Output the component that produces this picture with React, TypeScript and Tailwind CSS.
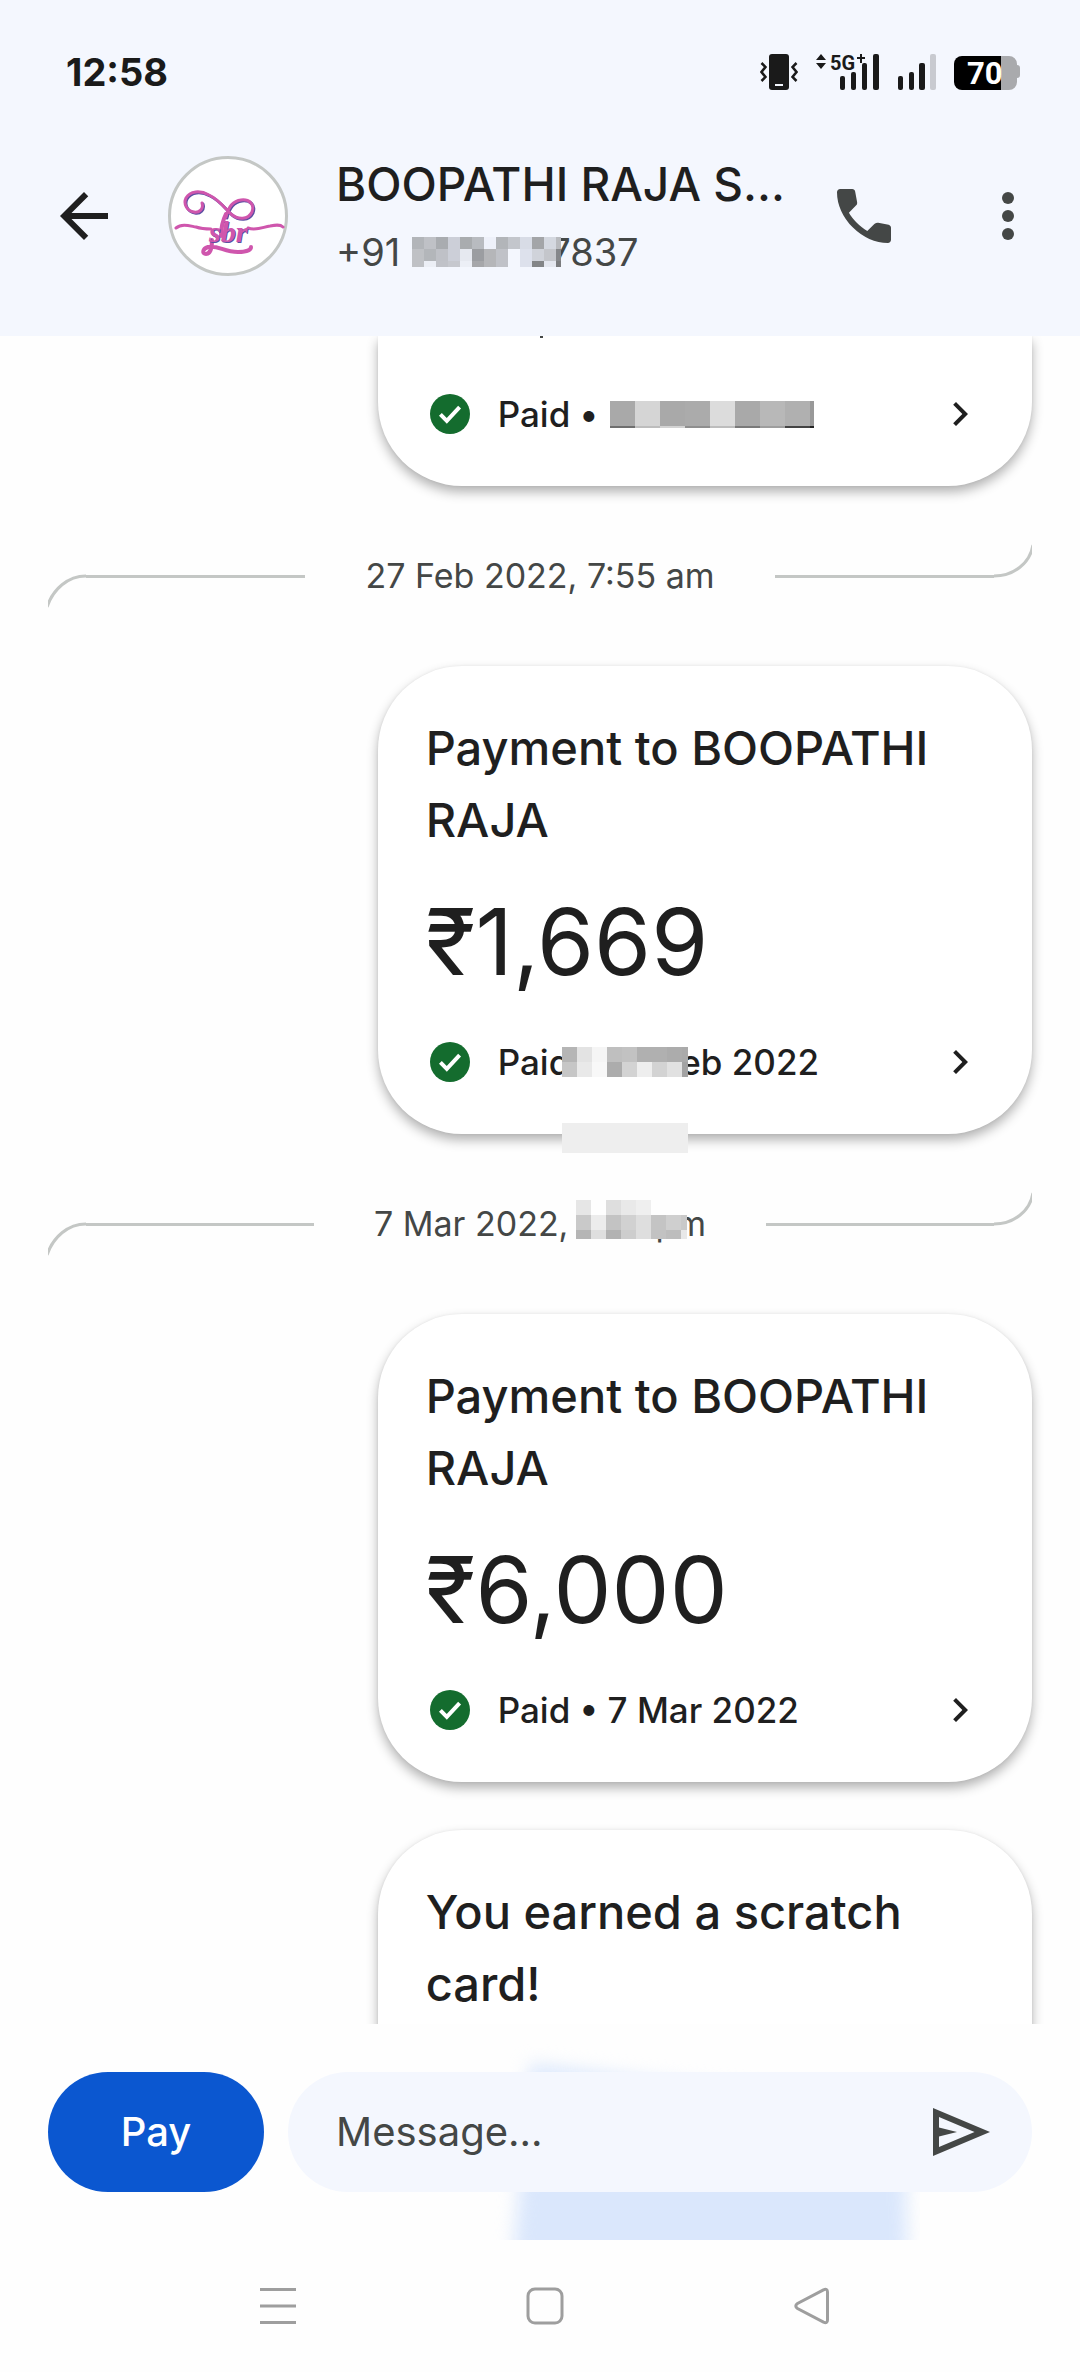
import React from "react";

interface MosaicRow {
  height: number;
  colors: string[];
}

interface MosaicProps {
  rows: MosaicRow[];
  cell: number;
  width: number;
  className?: string;
}

const PHONE_MOSAIC: MosaicRow[] = [
  { height: 12, colors: ["#b2b5b9", "#bfc1c6", "#a9acb0", "#cccfd8", "#a9acaf", "#b8bbc0", "#eef1fa", "#b2b5b9", "#c3c6cc", "#d8dce6", "#a3a5a8", "#d4d8e0", "#b9bbbf"] },
  { height: 12, colors: ["#bfc1c5", "#b3b6ba", "#bfc1c7", "#cccfd8", "#e6e9f0", "#9b9da1", "#b5b6b9", "#c0c2c8", "#f4f7fe", "#dde1ec", "#d0d3da", "#c4c6cb", "#85878a"] },
  { height: 6, colors: ["#bfc1c5", "#eceff6", "#c0c2c8", "#c6c8ce", "#eceff6", "#a6a7aa", "#b5b6b9", "#c0c2c8", "#f4f7fe", "#dde1ec", "#838587", "#e4e7ef", "#7b7c7e"] },
];

const DATE_MOSAIC_LONG: MosaicRow[] = [
  { height: 25, colors: ["#a9a9a9", "#d5d5d5", "#a9a9a9", "#ababab", "#dcdcdc", "#a9a9a9", "#b8b8b8", "#b0b0b0", "#999999"] },
  { height: 2, colors: ["#6f6f6f", "#bdbdbd", "#d3d3d3", "#8f8f8f", "#bdbdbd", "#7a7a7a", "#9e9e9e", "#444444", "#222222"] },
];

const DATE_MOSAIC_SHORT: MosaicRow[] = [
  { height: 15, colors: ["#b5b5b5", "#e3e3e3", "#f5f5f5", "#bfbfbf", "#c2c2c2", "#b0b0b0", "#b0b0b0", "#acacac", "#aaaaaa"] },
  { height: 15, colors: ["#c6c6c6", "#e9e9e9", "#f8f8f8", "#acacac", "#d3d3d3", "#eeeeee", "#d3d3d3", "#e1e1e1", "#a3a3a3"] },
];

const TIME_MOSAIC: MosaicRow[] = [
  { height: 15, colors: ["#e6e6e6", "none", "#dedede", "#e9e9e9", "#efefef", "none", "none", "none"] },
  { height: 15, colors: ["#c9c9c9", "#ececec", "#c3c3c3", "#d1d1d1", "#dedede", "#c4c4c4", "#cfcfcf", "#c9c9c9"] },
  { height: 9, colors: ["#b5b5b5", "#dfdfdf", "#b2b2b2", "#cdcdcd", "#dedede", "#c2c2c2", "#bdbdbd", "#e8e8e8"] },
];

function Mosaic({ rows, cell, width, className = "" }: MosaicProps) {
  const height = rows.reduce((sum, row) => sum + row.height, 0);
  let y = 0;

  return (
    <svg width={width} height={height} className={`shrink-0 ${className}`} shapeRendering="crispEdges" aria-hidden="true">
      {rows.map((row, r) => {
        const top = y;
        y += row.height;
        return row.colors.map((fill, c) => (
          <rect key={`${r}-${c}`} x={c * cell} y={top} width={cell} height={row.height} fill={fill} />
        ));
      })}
    </svg>
  );
}

function StatusBar() {
  return (
    <div className="flex h-36 items-center justify-between pl-[66px] pr-[60px] text-[#1a1a1a]">
      <span className="text-[38px] leading-10 font-bold">12:58</span>

      <div className="flex items-center gap-[18px]" aria-hidden="true">
        <svg width="38" height="38" viewBox="0 0 38 38" fill="currentColor">
          <rect x="9" y="1" width="20" height="36" rx="3" />
          <rect x="15" y="31" width="8" height="2" fill="#f4f7fe" />
          <path d="M1.500 10l4 4-4 5 4 5-4 4M36.500 10l-4 4 4 5-4 5 4 4" fill="none" stroke="currentColor" strokeWidth="2.500" />
        </svg>

        <svg width="64" height="38" viewBox="0 0 64 38" fill="currentColor" className="overflow-visible">
          <path d="M5 1l5 6H0zM5 16l5-6H0zM41 4h3V1h2v3h3v2h-3v4h-2V6h-3z" />
          <text x="14" y="17" fontSize="20" fontWeight="700" fontFamily="Roboto, sans-serif">5G</text>
          <rect x="24" y="23" width="5" height="14" rx="2" />
          <rect x="35" y="19" width="5" height="18" rx="2" />
          <rect x="46" y="10" width="5" height="27" rx="2" />
          <rect x="57" y="1" width="6" height="36" rx="2" />
        </svg>

        <svg width="38" height="38" viewBox="0 0 38 38" fill="currentColor">
          <rect x="0" y="23" width="5" height="14" rx="2" />
          <rect x="11" y="19" width="5" height="18" rx="2" />
          <rect x="21" y="10" width="6" height="27" rx="2" />
          <rect x="32" y="1" width="6" height="36" rx="2" fill="#c8cad0" />
        </svg>

        <svg width="66" height="38" viewBox="0 0 66 38">
          <path d="M47 3h8a8 8 0 0 1 8 8v1a3 3 0 0 1 3 3v7a3 3 0 0 1-3 3v4a8 8 0 0 1-8 8h-8z" fill="#a9aaad" />
          <path d="M8 3h39v34H8a8 8 0 0 1-8-8V11a8 8 0 0 1 8-8z" fill="#000" />
          <text x="13" y="31" fontSize="31" fontWeight="700" fontFamily="Roboto, sans-serif" fill="#fff">70</text>
        </svg>
      </div>
    </div>
  );
}

function Avatar() {
  return (
    <svg width="120" height="120" viewBox="0 0 120 120" className="shrink-0" role="img" aria-label="sbr">
      <circle cx="60" cy="60" r="58.500" fill="#fff" stroke="#c4c7c5" strokeWidth="3" />
      <g fill="none" stroke="#5b4fa3" strokeWidth="3" strokeLinecap="round" transform="translate(1 1)">
        <path d="M34 47c2 6-3 10-8 9-7-1-11-8-8-14 4-7 14-8 23-3 9 4 15 12 22 19 7 6 17 6 21-2 3-8-3-13-11-12-9 1-13 8-15 17" />
      </g>
      <g fill="none" stroke="#cf56ad" strokeLinecap="round">
        <path strokeWidth="3" d="M34 47c2 6-3 10-8 9-7-1-11-8-8-14 4-7 14-8 23-3 9 4 15 12 22 19 7 6 17 6 21-2 3-8-3-13-11-12-9 1-13 8-15 17" />
        <path strokeWidth="4" d="M58 58c-4 8-5 15-5 22" />
        <path strokeWidth="3" d="M8 72c6-5 14-2 20-1 6 2 11 2 15 2M80 72c8 3 15-1 22-2 5-1 10-2 13 1" />
        <path strokeWidth="4" d="M44 84c0 8-2 14-6 14-4 0-4-5 2-7 10-2 16 5 30 5 8 0 13-2 13-5" />
      </g>
      <text x="42" y="87" fontSize="30" fontStyle="italic" fontWeight="700" fontFamily="Liberation Serif, serif" fill="#5b4fa3">sbr</text>
      <text x="41" y="86" fontSize="30" fontStyle="italic" fontWeight="700" fontFamily="Liberation Serif, serif" fill="#cf56ad">sbr</text>
    </svg>
  );
}

function ChatHeader() {
  return (
    <header className="shrink-0 bg-[#f4f7fe] pb-12">
      <StatusBar />
      <div className="flex h-36 items-center pl-12 pr-9">
        <button type="button" aria-label="Back" className="shrink-0 text-[#1f1f1f]">
          <svg width="72" height="72" viewBox="0 0 24 24" fill="currentColor">
            <path d="M20 11H7.830l5.590-5.590L12 4l-8 8 8 8 1.410-1.410L7.830 13H20v-2z" />
          </svg>
        </button>
        <div className="ml-12 shrink-0">
          <Avatar />
        </div>
        <div className="ml-12 min-w-0 flex-1">
          <h1 className="truncate text-[46px] leading-[72px] font-medium text-[#1f1f1f]">BOOPATHI RAJA S...</h1>
          <p className="flex h-16 items-center text-[38px] leading-[64px] text-[#444746]">
            <span>+91</span>
            <Mosaic rows={PHONE_MOSAIC} cell={12} width={149} className="z-10 ml-3 -mr-3" />
            <span>7837</span>
          </p>
        </div>
        <button type="button" aria-label="Call" className="shrink-0 text-[#444746]">
          <svg width="72" height="72" viewBox="0 -960 960 960" fill="currentColor">
            <path d="M798-120q-125 0-247-54.500T329-329Q229-429 174.500-551T120-798q0-18 12-30t30-12h162q14 0 25 9.500t13 22.500l26 140q2 16-1 27t-11 19l-97 98q20 37 47.500 71.500T387-386q31 31 65 57.500t72 48.500l94-94q9-9 23.500-13.500T670-390l138 28q14 4 23 14.500t9 23.500v162q0 18-12 30t-30 12Z" />
          </svg>
        </button>
        <button type="button" aria-label="More options" className="ml-[72px] shrink-0 text-[#444746]">
          <svg width="72" height="72" viewBox="0 0 24 24" fill="currentColor">
            <circle cx="12" cy="6" r="2" />
            <circle cx="12" cy="12" r="2" />
            <circle cx="12" cy="18" r="2" />
          </svg>
        </button>
      </div>
    </header>
  );
}

function DateDivider({ children }: { children: React.ReactNode }) {
  return (
    <div className="flex h-[180px] items-center">
      <div className="flex flex-1 items-center">
        <svg width="38" height="66" viewBox="0 0 38 66" fill="none" stroke="#c4c7c5" strokeWidth="3" aria-hidden="true">
          <path d="M-1 64C5 46 20 33 38 33" />
        </svg>
        <div className="h-[3px] flex-1 bg-[#c4c7c5]" />
      </div>
      <div className="mx-[60px] flex items-center text-[34px] leading-12 text-[#444746]">{children}</div>
      <div className="flex flex-1 items-center">
        <div className="h-[3px] flex-1 bg-[#c4c7c5]" />
        <svg width="38" height="66" viewBox="0 0 38 66" fill="none" stroke="#c4c7c5" strokeWidth="3" aria-hidden="true">
          <path d="M0 33C20 33 36 20 39 2" />
        </svg>
      </div>
    </div>
  );
}

function PaidRow({ children }: { children: React.ReactNode }) {
  return (
    <div className="flex h-12 items-center text-[#1f1f1f]">
      <svg width="48" height="48" viewBox="0 0 24 24" className="shrink-0" aria-hidden="true">
        <circle cx="12" cy="12" r="10" fill="#146c2e" />
        <path d="M7.200 12.200l3.200 3.200 6.400-6.800" fill="none" stroke="#fff" strokeWidth="2" />
      </svg>
      <div className="ml-6 flex flex-1 items-center text-[35px] leading-12 font-medium">{children}</div>
      <svg width="48" height="48" viewBox="0 0 24 24" fill="currentColor" className="shrink-0" aria-hidden="true">
        <path d="M10 6L8.590 7.410 13.170 12l-4.580 4.590L10 18l6-6z" />
      </svg>
    </div>
  );
}

function PaymentCard({ amount, children }: { amount: string; children: React.ReactNode }) {
  return (
    <article className="relative ml-auto w-[66.500%] rounded-[84px] bg-white px-12 pt-[46px] pb-12 shadow-[0_6px_12px_rgba(0,0,0,0.3),0_0_3px_rgba(0,0,0,0.06)]">
      <h2 className="text-[47px] leading-[72px] font-medium text-[#1f1f1f]">Payment to BOOPATHI RAJA</h2>
      <p className="mt-[26px] mb-9 text-[92px] leading-[120px] text-[#1f1f1f]">{amount}</p>
      {children}
    </article>
  );
}

function Composer() {
  return (
    <form className="relative flex shrink-0 items-center gap-6 overflow-hidden bg-[#fefefe] p-12" onSubmit={(e) => e.preventDefault()}>
      {/* scratch card artwork showing softly through the bar */}
      <svg viewBox="0 0 440 216" className="absolute inset-y-0 right-[160px] h-full w-[440px]" aria-hidden="true">
        <polygon points="50,40 425,88 428,290 28,290" fill="#dae7fc" className="blur-[9px]" />
      </svg>
      <button type="submit" className="relative h-[120px] w-[216px] shrink-0 rounded-full bg-[#0b57d0] text-[40px] font-medium text-white">
        Pay
      </button>
      <div className="relative flex h-[120px] min-w-0 flex-1 items-center rounded-full bg-[#f4f7fe] pl-12 pr-9">
        <input
          type="text"
          aria-label="Message"
          placeholder="Message..."
          className="min-w-0 flex-1 bg-transparent text-[40px] text-[#1f1f1f] outline-none placeholder:text-[#444746]"
        />
        <button type="button" aria-label="Send" className="shrink-0 text-[#444746]">
          <svg width="72" height="72" viewBox="0 -960 960 960" fill="currentColor">
            <path d="M120-160v-640l760 320-760 320Zm80-120 474-200-474-200v140l240 60-240 60v140Z" />
          </svg>
        </button>
      </div>
    </form>
  );
}

function NavigationBar() {
  return (
    <nav className="flex h-[132px] shrink-0 items-center justify-center gap-[230px] bg-[#fefefe] pl-2.5 text-[#9e9e9e]">
      <button type="button" aria-label="Recent apps">
        <svg width="36" height="38" viewBox="0 0 36 38" stroke="currentColor" strokeWidth="3">
          <path d="M0 2.500h36M0 19h36M0 35.500h36" />
        </svg>
      </button>
      <button type="button" aria-label="Home">
        <svg width="38" height="38" viewBox="0 0 38 38" fill="none" stroke="currentColor" strokeWidth="3">
          <rect x="2" y="2" width="34" height="34" rx="7" />
        </svg>
      </button>
      <button type="button" aria-label="Back">
        <svg width="36" height="38" viewBox="0 0 36 38" fill="none" stroke="currentColor" strokeWidth="3">
          <path d="M29.500 2.800L3.500 16.500Q0 19 3.500 21.500L29.500 35.200Q33.500 37 33.500 33V5Q33.500 1 29.500 2.800Z" />
        </svg>
      </button>
    </nav>
  );
}

export default function App() {
  return (
    <div className="flex h-dvh flex-col overflow-hidden bg-[#fefefe] font-['Inter','Noto_Sans',sans-serif]">
      <ChatHeader />

      <main className="min-h-0 flex-1 overflow-hidden px-12">
        <article className="ml-auto w-[66.500%] rounded-b-[84px] bg-white px-12 pb-12 shadow-[0_6px_12px_rgba(0,0,0,0.3),0_0_3px_rgba(0,0,0,0.06)]">
          <div className="flex h-[54px] items-start">
            <span className="ml-[114px] h-0.5 w-[3px] bg-[#444746]" />
          </div>
          <PaidRow>
            <span>Paid •</span>
            <Mosaic rows={DATE_MOSAIC_LONG} cell={25} width={204} className="ml-3" />
          </PaidRow>
        </article>

        <DateDivider>27 Feb 2022, 7:55 am</DateDivider>

        <PaymentCard amount="₹1,669">
          <PaidRow>
            <span>Paid</span>
            <Mosaic rows={DATE_MOSAIC_SHORT} cell={15} width={126} className="z-10 -ml-2 -mr-2" />
            <span>eb 2022</span>
          </PaidRow>
          <div className="absolute -bottom-[19px] left-[184px] h-[30px] w-[126px] bg-[#eeeeee]" />
        </PaymentCard>

        <DateDivider>
          <span>7 Mar 2022,</span>
          <Mosaic rows={TIME_MOSAIC} cell={15} width={111} className="z-10 mb-2.5 ml-2 -mr-8" />
          <span>pm</span>
        </DateDivider>

        <PaymentCard amount="₹6,000">
          <PaidRow>
            <span>Paid • 7 Mar 2022</span>
          </PaidRow>
        </PaymentCard>

        <article className="mt-12 ml-auto h-80 w-[66.500%] rounded-t-[84px] bg-white px-12 pt-[46px] shadow-[0_6px_12px_rgba(0,0,0,0.3),0_0_3px_rgba(0,0,0,0.06)]">
          <h2 className="text-[47px] leading-[72px] font-medium text-[#1f1f1f]">You earned a scratch card!</h2>
        </article>
      </main>

      <Composer />
      <NavigationBar />
    </div>
  );
}
